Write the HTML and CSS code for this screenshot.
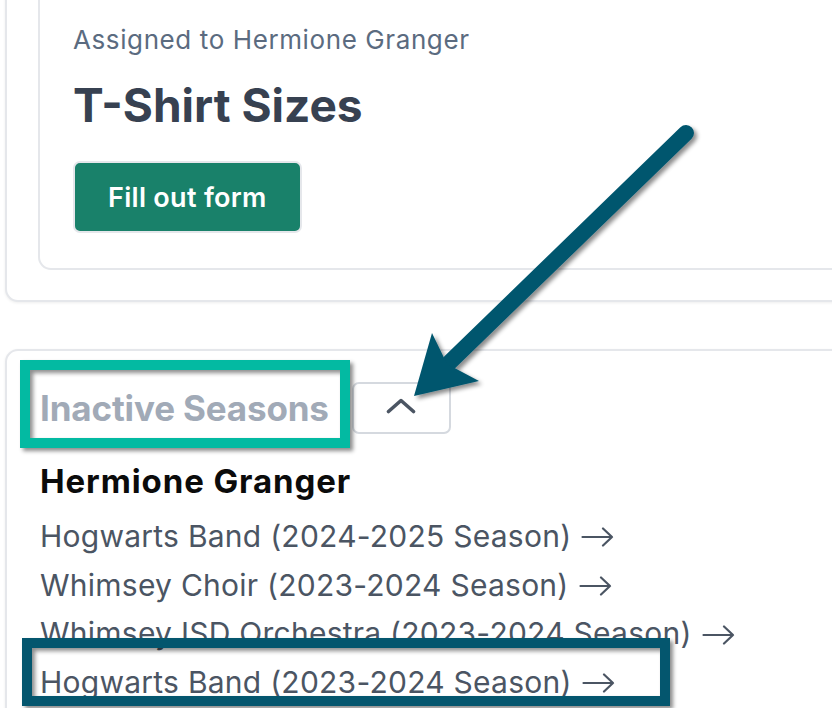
FILE: index.html
```html
<!DOCTYPE html>
<html lang="en">
<head>
<meta charset="utf-8">
<title>Forms and Seasons</title>
<link rel="stylesheet" href="styles.css">
</head>
<body>
<div class="page">
  <section class="card">
    <div class="task">
      <p class="assigned">Assigned to Hermione Granger</p>
      <h2 class="task-title">T-Shirt Sizes</h2>
      <button class="btn-primary" type="button">Fill out form</button>
    </div>
  </section>

  <section class="card seasons">
    <div class="seasons-head">
      <h2 class="seasons-title">Inactive Seasons</h2>
      <button class="toggle" type="button" aria-label="Collapse">
        <svg class="chevron" width="30" height="16" viewBox="0 0 30 16"><path d="M2.5 13.5 L15 2.5 L27.5 13.5" fill="none" stroke="#4b5563" stroke-width="3.6" stroke-linecap="round" stroke-linejoin="round"/></svg>
      </button>
    </div>
    <h3 class="member">Hermione Granger</h3>
    <ul class="season-links">
      <li><a href="#">Hogwarts Band (2024-2025 Season)<svg class="go" width="33" height="20" viewBox="0 0 33 20"><path d="M1.5 10 H31 M22 1.5 L31 10 L22 18.5" fill="none" stroke="#4b5563" stroke-width="2.2" stroke-linecap="round" stroke-linejoin="round"/></svg></a></li>
      <li><a href="#">Whimsey Choir (2023-2024 Season)<svg class="go" width="33" height="20" viewBox="0 0 33 20"><path d="M1.5 10 H31 M22 1.5 L31 10 L22 18.5" fill="none" stroke="#4b5563" stroke-width="2.2" stroke-linecap="round" stroke-linejoin="round"/></svg></a></li>
      <li><a href="#">Whimsey ISD Orchestra (2023-2024 Season)<svg class="go" width="33" height="20" viewBox="0 0 33 20"><path d="M1.5 10 H31 M22 1.5 L31 10 L22 18.5" fill="none" stroke="#4b5563" stroke-width="2.2" stroke-linecap="round" stroke-linejoin="round"/></svg></a></li>
      <li><a href="#">Hogwarts Band (2023-2024 Season)<svg class="go" width="33" height="20" viewBox="0 0 33 20"><path d="M1.5 10 H31 M22 1.5 L31 10 L22 18.5" fill="none" stroke="#4b5563" stroke-width="2.2" stroke-linecap="round" stroke-linejoin="round"/></svg></a></li>
    </ul>
  </section>

  <div class="callout callout-green"></div>
  <div class="callout callout-blue"></div>

  <svg class="pointer" width="832" height="708" viewBox="0 0 832 708">
    <defs>
      <filter id="sh" x="-20%" y="-20%" width="140%" height="140%">
        <feDropShadow dx="3" dy="3" stdDeviation="2" flood-color="#000" flood-opacity="0.45"/>
      </filter>
    </defs>
    <g filter="url(#sh)" fill="#04566e">
      <line x1="686" y1="133" x2="450" y2="362" stroke="#04566e" stroke-width="16" stroke-linecap="round"/>
      <polygon points="414,396 432,333 447,364 479,381"/>
    </g>
  </svg>
</div>
</body>
</html>
```

FILE: styles.css
```css
* { box-sizing: border-box; }

html, body {
  margin: 0;
  padding: 0;
  background: #ffffff;
}

body {
  font-family: Inter, "Noto Sans", "Liberation Sans", sans-serif;
}

.page {
  position: relative;
  width: 832px;
  height: 708px;
  overflow: hidden;
}

.card {
  width: 880px;
  margin-left: 5px;
  border: 2px solid #e5e7eb;
  border-radius: 13px;
  background: #fff;
  box-shadow: 0 1px 3px rgba(0, 0, 0, 0.07);
}

.card:first-child {
  margin-top: -55px;
  padding: 30px 0 30px 31px;
}

.task {
  border: 2px solid #e5e7eb;
  border-radius: 13px;
  padding: 46px 0 35px 33px;
}

.assigned {
  margin: 0;
  font-size: 26px;
  line-height: 30px;
  letter-spacing: 0.6px;
  color: #5b6b80;
  font-weight: 400;
}

.task-title {
  margin: 22px 0 0;
  font-size: 46px;
  line-height: 56px;
  font-weight: 700;
  color: #374151;
}

.btn-primary {
  display: inline-flex;
  align-items: center;
  justify-content: center;
  margin-top: 28px;
  height: 72px;
  padding: 0 33px;
  border: 2px solid #e5e7eb;
  border-radius: 7px;
  background: #19816a;
  color: #fff;
  font-family: inherit;
  font-size: 27px;
  letter-spacing: 0.3px;
  font-weight: 600;
}

.seasons {
  margin-top: 47px;
  height: 420px;
  padding: 31px 0 0 33px;
}

.seasons-head {
  display: flex;
  align-items: center;
  gap: 23px;
  height: 51px;
}

.seasons-title {
  margin: 0;
  font-size: 35px;
  line-height: 40px;
  letter-spacing: -0.15px;
  font-weight: 700;
  color: #a1aab7;
}

.toggle {
  display: flex;
  align-items: center;
  justify-content: center;
  flex: none;
  width: 99px;
  height: 52px;
  padding: 0 0 3px;
  border: 2px solid #d5d9df;
  border-radius: 7px;
  background: #fff;
}

.member {
  margin: 28px 0 0;
  font-size: 33px;
  line-height: 40px;
  letter-spacing: 0.9px;
  font-weight: 700;
  color: #0b0b0b;
}

.season-links {
  list-style: none;
  margin: 11px 0 0;
  padding: 0;
}

.season-links li {
  font-size: 30px;
  line-height: 48.7px;
  letter-spacing: 0.25px;
}

.season-links a {
  display: inline-flex;
  align-items: center;
  gap: 10px;
  color: #4b5563;
  text-decoration: none;
}

.go {
  flex: none;
  margin-top: 2px;
}

.callout {
  position: absolute;
  border-style: solid;
  border-width: 10px;
  box-shadow: 3px 3px 4px rgba(0, 0, 0, 0.45), inset 3px 3px 4px rgba(0, 0, 0, 0.45);
}

.callout-green {
  left: 20px;
  top: 360px;
  width: 330px;
  height: 88px;
  border-color: #03baa2;
}

.callout-blue {
  left: 22px;
  top: 638px;
  width: 648px;
  height: 68px;
  border-color: #04566e;
}

.pointer {
  position: absolute;
  left: 0;
  top: 0;
  pointer-events: none;
}
```
